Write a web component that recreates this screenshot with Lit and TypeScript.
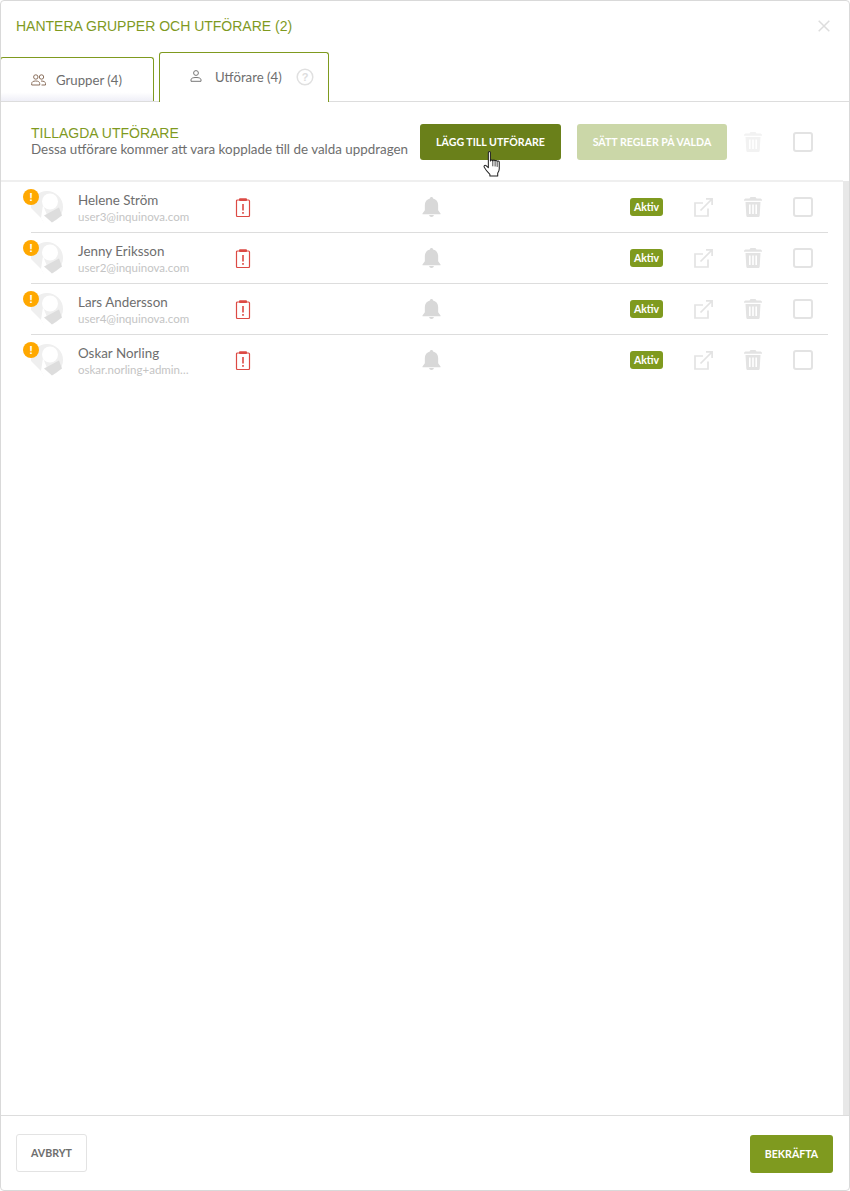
import { LitElement, html, css, svg } from 'lit'
import { customElement } from 'lit/decorators.js'

const users = [
  { name: 'Helene Ström', mail: 'user3@inquinova.com' },
  { name: 'Jenny Eriksson', mail: 'user2@inquinova.com' },
  { name: 'Lars Andersson', mail: 'user4@inquinova.com' },
  { name: 'Oskar Norling', mail: 'oskar.norling+admin@inquinova.com' }
]

const trash = (color: string) => html`<svg width="18" height="20" viewBox="0 0 18 20">
  <path fill=${color} d="M6.500 0h5l1 1.600H16c1 0 2 .6 2 1.700v.5H0v-.5c0-1.100 1-1.700 2-1.700h3.500zM1.500 5h15l-.8 13.400c-.1 1-.8 1.600-1.700 1.600H4c-.9 0-1.600-.6-1.700-1.600zM5 7.500v9.500h1.600V7.500zm3.200 0v9.500h1.600V7.500zm3.200 0v9.500H13V7.500z"/>
</svg>`

const avatar = svg`<svg width="32" height="32" viewBox="0 0 32 32">
  <circle cx="16" cy="16" r="16" fill="#efefef"/>
  <path fill="#fff" d="M0 17L10 27L13 32H0z"/>
  <path fill="#fff" d="M10 27L12 14L16 24L21 32H13z"/>
  <circle cx="19" cy="10.500" r="8" fill="#fff"/>
  <path fill="#ddd" d="M13 24.500L28 16.500L31 24.500L21 31.500z"/>
</svg>`

@customElement('app-root')
export class AppRoot extends LitElement {
  static styles = css`
    :host {
      display: block;
      width: 850px;
      height: 1191px;
      font-family: Lato, "Noto Sans", sans-serif;
      color: #6e6e6e;
    }
    .modal {
      box-sizing: border-box;
      height: 1191px;
      border: 1px solid #d9d9d9;
      border-radius: 4px;
      display: flex;
      flex-direction: column;
      background: #fff;
      overflow: hidden;
    }
    .head {
      height: 51px;
      display: flex;
      justify-content: space-between;
      padding: 15px 19px 0 15px;
      box-sizing: border-box;
      flex: none;
    }
    .title {
      font: 14px/20px "Liberation Sans", Arial, sans-serif;
      color: #7f9a1f;
    }
    .close { margin-top: 4px; }
    .tabs {
      height: 50px;
      flex: none;
      display: flex;
      align-items: flex-end;
      gap: 5px;
      border-bottom: 1px solid #ddd;
      box-sizing: border-box;
    }
    .tab {
      box-sizing: border-box;
      border: 1px solid #7f9a1f;
      border-bottom: none;
      border-radius: 3px 3px 0 0;
      display: flex;
      align-items: flex-start;
      font-size: 13.200px;
      line-height: 18px;
      color: #6e6e6e;
    }
    .tab.groups {
      width: 154px;
      height: 44px;
      margin-left: -1px;
      padding: 13px 0 0 30px;
      gap: 10px;
      background: linear-gradient(#fff 80%, #efeff7);
    }
    .tab.users {
      width: 170px;
      height: 50px;
      margin-bottom: -1px;
      padding: 15px 0 0 30px;
      background: #fff;
      gap: 13px;
    }
    .tab svg { margin-top: 3px; flex: none; }
    .tab.users svg { margin-top: 2px; }
    .tab.users .help { margin: 0 0 0 1px; }
    .toolbar {
      height: 78px;
      flex: none;
      display: flex;
      align-items: flex-start;
      box-sizing: border-box;
      padding: 22px 0 0 30px;
    }
    .intro { width: 389px; flex: none; }
    .intro h2 {
      margin: 0;
      font: 400 14px/15px "Liberation Sans", Arial, sans-serif;
      color: #7f9a1f;
      padding-top: 2px;
    }
    .intro p {
      margin: 0;
      font-size: 13.400px;
      line-height: 16px;
      color: #6e6e6e;
      white-space: nowrap;
    }
    .btn {
      box-sizing: border-box;
      height: 36px;
      border-radius: 3px;
      font-size: 10.600px;
      font-weight: 700;
      color: #fff;
      display: flex;
      align-items: center;
      justify-content: center;
      white-space: nowrap;
    }
    .add { position: relative; width: 141px; background: #6a801a; }
    .rules { width: 150px; margin-left: 16px; background: #cbd7a8; }
    .cursor { position: absolute; left: 63px; top: 27px; }
    .top-trash { margin: 8px 0 0 17px; }
    .check {
      box-sizing: border-box;
      width: 20px;
      height: 20px;
      border: 2px solid #e3e3e3;
      border-radius: 3px;
      flex: none;
    }
    .toolbar .check { margin: 8px 0 0 31px; }
    .content {
      flex: 1;
      display: flex;
      min-height: 0;
    }
    .list {
      flex: 1;
      border-top: 2px solid #efefef;
    }
    .bar { width: 6px; margin-top: 1px; background: #e8e8e8; flex: none; }
    .row {
      margin-left: 30px;
      margin-right: 15px;
      height: 51px;
      box-sizing: border-box;
      border-bottom: 1px solid #ddd;
      display: flex;
      align-items: center;
    }
    .row:last-child { border-bottom-color: transparent; }
    .avatar { position: relative; width: 47px; height: 32px; flex: none; }
    .avatar svg { display: block; }
    .badge {
      position: absolute;
      left: -8px;
      top: -2px;
      width: 16px;
      height: 16px;
      border-radius: 50%;
      background: #ffa800;
      color: #fff;
      font: 700 11px/16px "Liberation Sans", sans-serif;
      text-align: center;
    }
    .who { width: 157px; flex: none; padding-top: 3px; }
    .name { font-size: 13.400px; line-height: 16px; margin-bottom: 1px; color: #6e6e6e; }
    .mail {
      font-size: 11.500px;
      line-height: 16px;
      color: #c4c4c4;
      width: 118px;
      overflow: hidden;
      text-overflow: ellipsis;
      white-space: nowrap;
    }
    .row svg { display: block; flex: none; }
    .clip { margin-right: 171px; }
    .bell { margin-right: 189px; }
    .aktiv {
      width: 33px;
      height: 18px;
      border-radius: 3px;
      background: #7f9a1f;
      color: #fff;
      font-size: 10.500px;
      font-weight: 700;
      line-height: 18px;
      text-align: center;
      flex: none;
    }
    .ext { margin: 0 31px 0 31px; }
    .row .check { margin-left: 31px; }
    .foot {
      height: 75px;
      flex: none;
      border-top: 1px solid #ddd;
      box-sizing: border-box;
      display: flex;
      justify-content: space-between;
      padding: 18px 16px 0 15px;
    }
    .cancel {
      width: 71px;
      height: 38px;
      border: 1px solid #e3e3e3;
      color: #6e6e6e;
    }
    .ok {
      width: 83px;
      height: 38px;
      background: #7f9a1f;
      margin-top: 1px;
    }
  `

  renderRow (u: { name: string, mail: string }) {
    return html`<div class="row">
      <div class="avatar">${avatar}<span class="badge">!</span></div>
      <div class="who">
        <div class="name">${u.name}</div>
        <div class="mail">${u.mail}</div>
      </div>
      <svg class="clip" width="16" height="19" viewBox="0 0 16 19">
        <rect x="1.500" y="2" width="13" height="16.500" rx="1" fill="none" stroke="#dc4a44" stroke-width="1.200"/>
        <rect x="4" y="0.200" width="8" height="2.800" rx="1" fill="#dc4a44"/>
        <rect x="7.200" y="6" width="1.600" height="6.500" fill="#dc4a44"/>
        <rect x="7.200" y="14" width="1.600" height="1.800" fill="#dc4a44"/>
      </svg>
      <svg class="bell" width="19" height="20" viewBox="0 0 20 21">
        <path fill="#d8d8d8" d="M10 0c1 0 1.600.7 1.700 1.600C15 2.400 17 5 17 8.500V14l2.500 3.300V18H.5v-.7L3 14V8.500c0-3.500 2-6.100 5.300-6.900C8.400.7 9 0 10 0z"/>
        <path fill="#d8d8d8" d="M7.500 19h5c-.2 1.200-1.200 2-2.500 2s-2.300-.8-2.500-2z"/>
      </svg>
      <span class="aktiv">Aktiv</span>
      <svg class="ext" width="19" height="19" viewBox="0 0 19 19" fill="none" stroke="#e3e3e3" stroke-width="1.700">
        <path d="M14 10.500V18H1V5h8"/>
        <path d="M6.500 12.500L18 1M12 .9h6.100V7"/>
      </svg>
      ${trash('#e3e3e3')}
      <span class="check"></span>
    </div>`
  }

  render () {
    return html`<div class="modal">
      <div class="head">
        <div class="title">HANTERA GRUPPER OCH UTFÖRARE (2)</div>
        <svg class="close" width="12" height="12" viewBox="0 0 12 12">
          <path d="M.7.700l10.600 10.600M11.300.700L.7 11.300" stroke="#ddd" stroke-width="1.500"/>
        </svg>
      </div>
      <div class="tabs">
        <div class="tab groups">
          <svg width="15" height="12" viewBox="0 0 15 12" fill="none" stroke="#8a6f5c" stroke-width="1">
            <circle cx="4.800" cy="3" r="2.200"/><circle cx="10.500" cy="3" r="2.200"/>
            <path d="M.7 11V9.500c0-1.500 1.300-2.500 4-2.500s4 1 4 2.500V11zM10 7c3 0 4.500 1 4.500 2.500V11h-4"/>
          </svg>
          <span>Grupper (4)</span>
        </div>
        <div class="tab users">
          <svg width="12" height="12" viewBox="0 0 12 12" fill="none" stroke="#777" stroke-width="1">
            <circle cx="6" cy="3" r="2.400"/>
            <path d="M1 11.300V9.800c0-1.500 1.800-2.300 5-2.300s5 .8 5 2.300v1.500z"/>
          </svg>
          <span>Utförare (4)</span>
          <svg class="help" width="18" height="18" viewBox="0 0 18 18">
            <circle cx="9" cy="9" r="7.800" fill="none" stroke="#e0e0e0" stroke-width="1.500"/>
            <text x="9" y="13" text-anchor="middle" font-family="Liberation Sans" font-weight="700" font-size="11" fill="#ddd">?</text>
          </svg>
        </div>
      </div>
      <div class="toolbar">
        <div class="intro">
          <h2>TILLAGDA UTFÖRARE</h2>
          <p>Dessa utförare kommer att vara kopplade till de valda uppdragen</p>
        </div>
        <div class="btn add">LÄGG TILL UTFÖRARE
          <svg class="cursor" width="19" height="26" viewBox="0 0 18 25">
            <path fill="#fff" stroke="#222" stroke-width="1" stroke-linejoin="round" d="M5 1.500c0-1.300 2-1.300 2 0v8c0-1.200 2.300-1.200 2.300 0 0-1 2.200-1 2.200.2 0-.9 2-.8 2 .4 .1-.7 2-.6 2 .6v6.300c0 2-.7 3-1.500 4.200V24H6.500v-1.500C4 20 2 17.500 1 15.500c-.5-1 .5-2.500 1.800-1.500L5 16z"/>
            <path stroke="#222" stroke-width=".8" d="M9.300 9.700v5M11.500 9.900v5M13.500 10.300v5"/>
          </svg>
        </div>
        <div class="btn rules">SÄTT REGLER PÅ VALDA</div>
        <div class="top-trash">${trash('#f2f2f2')}</div>
        <span class="check"></span>
      </div>
      <div class="content">
        <div class="list">${users.map(u => this.renderRow(u))}</div>
        <div class="bar"></div>
      </div>
      <div class="foot">
        <div class="btn cancel">AVBRYT</div>
        <div class="btn ok">BEKRÄFTA</div>
      </div>
    </div>`
  }
}
